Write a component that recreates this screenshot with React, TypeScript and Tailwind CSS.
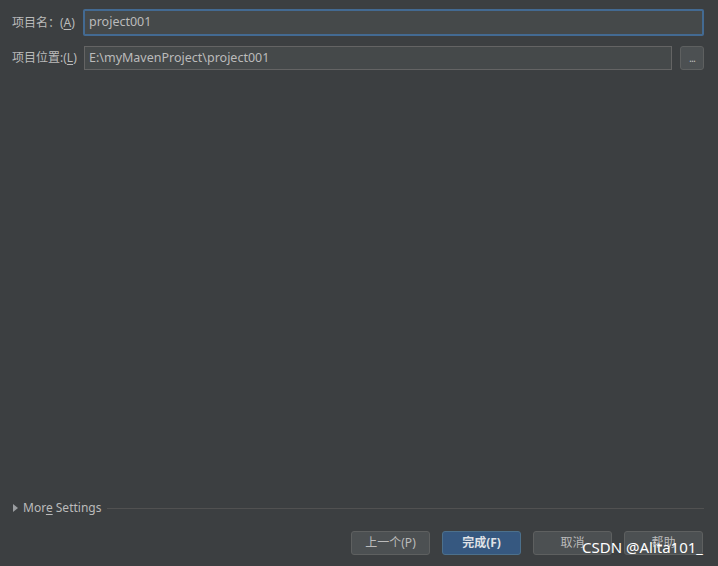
import React from "react"

const FONT = "font-['Noto_Sans','Noto_Sans_CJK_SC',sans-serif]"

function Mnemonic({ children }: { children: string }) {
    return <span className="underline underline-offset-2">{children}</span>
}

function DialogButton({ label, primary }: { label: React.ReactNode; primary?: boolean }) {
    return (
        <button
            className={
                primary
                    ? "h-[24px] w-[79px] rounded-[3px] border border-[#4c708c] bg-[#365880] text-[12px] font-bold text-[#dfe1e5]"
                    : "h-[24px] w-[79px] rounded-[3px] border border-[#5e6060] bg-[#4c5052] text-[12px] text-[#bbbbbb]"
            }
        >
            {label}
        </button>
    )
}

export default function App() {
    return (
        <div className={`${FONT} relative flex h-[566px] w-[718px] flex-col bg-[#3c3f41] text-[12px] text-[#bbbbbb]`}>
            {/* Name + location fields */}
            <div className="flex flex-col gap-[10px] pl-[12px] pr-[14px] pt-[9px]">
                <div className="flex items-center">
                    <label className="w-[71px] shrink-0 whitespace-nowrap">
                        项目名：(<Mnemonic>A</Mnemonic>)
                    </label>
                    <div className="flex h-[27px] flex-1 items-center rounded-[2px] border-2 border-[#436a92] bg-[#45494a] px-[4px] text-[12.5px]">
                        project001
                    </div>
                </div>
                <div className="flex items-center">
                    <label className="w-[72px] shrink-0 whitespace-nowrap">
                        项目位置:(<Mnemonic>L</Mnemonic>)
                    </label>
                    <div className="flex h-[24px] flex-1 items-center border border-[#646464] bg-[#45494a] px-[4px] text-[12.5px]">
                        E:\myMavenProject\project001
                    </div>
                    <button className="ml-[8px] flex h-[24px] w-[24px] items-end justify-center rounded-[3px] border border-[#5e6060] bg-[#4c5052] pb-[6px] text-[11px] leading-none">
                        <span className="tracking-[-1px]">...</span>
                    </button>
                </div>
            </div>

            <div className="flex-1" />

            {/* More settings */}
            <div className="flex items-center pl-[13px] pr-[14px]">
                <svg width="5" height="8" viewBox="0 0 5 8" className="mr-[5px]">
                    <path d="M0 0 L5 4 L0 8 Z" fill="#9a9da0" />
                </svg>
                <span className="whitespace-nowrap">
                    Mor<Mnemonic>e</Mnemonic> Settings
                </span>
                <div className="ml-[6px] h-px flex-1 bg-[#515151]" />
            </div>

            {/* Buttons */}
            <div className="flex justify-end gap-[12px] pb-[11px] pr-[15px] pt-[14px]">
                <DialogButton label="上一个(P)" />
                <DialogButton label="完成(F)" primary />
                <DialogButton label="取消" />
                <DialogButton label="帮助" />
            </div>

            {/* watermark */}
            <div className="absolute bottom-[8px] right-[15px] text-[15px] text-white">CSDN @Alita101_</div>
        </div>
    )
}
